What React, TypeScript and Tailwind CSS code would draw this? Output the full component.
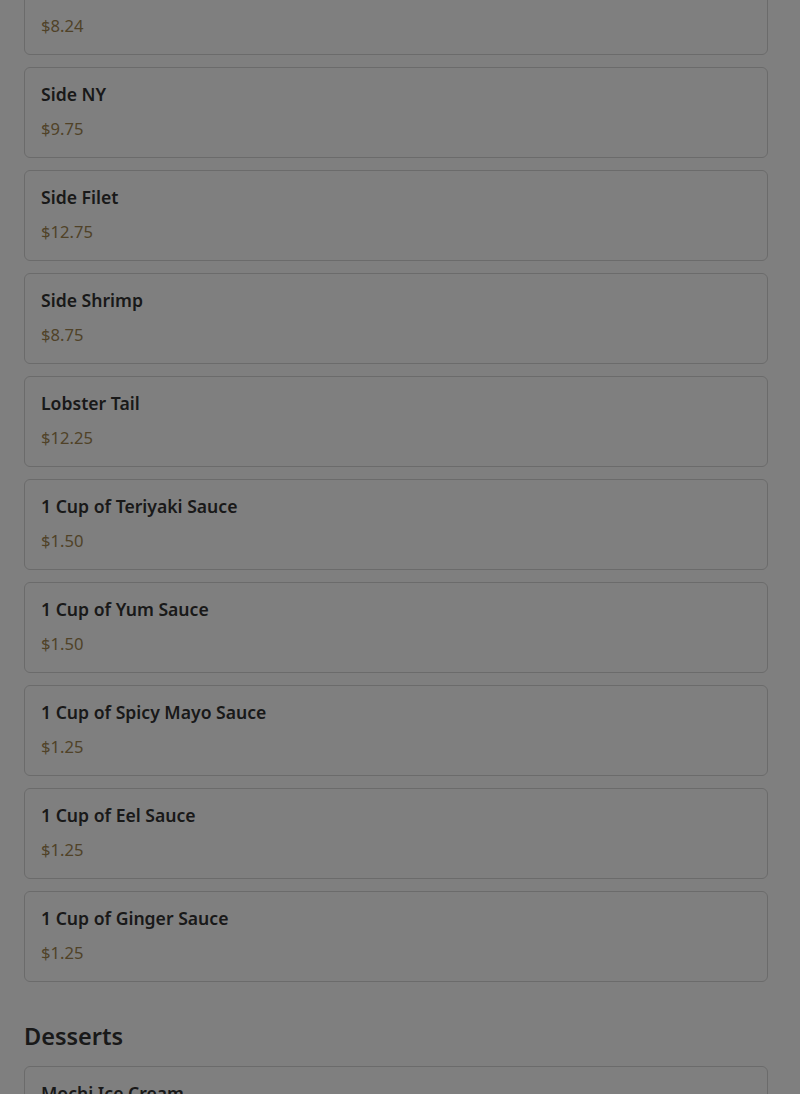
import React from 'react'

interface MenuItem {
  name: string
  price: string
}

const sides: MenuItem[] = [
  { name: 'Side Chicken', price: '$8.24' },
  { name: 'Side NY', price: '$9.75' },
  { name: 'Side Filet', price: '$12.75' },
  { name: 'Side Shrimp', price: '$8.75' },
  { name: 'Lobster Tail', price: '$12.25' },
  { name: '1 Cup of Teriyaki Sauce', price: '$1.50' },
  { name: '1 Cup of Yum Sauce', price: '$1.50' },
  { name: '1 Cup of Spicy Mayo Sauce', price: '$1.25' },
  { name: '1 Cup of Eel Sauce', price: '$1.25' },
  { name: '1 Cup of Ginger Sauce', price: '$1.25' },
]

const desserts: MenuItem[] = [
  { name: 'Mochi Ice Cream', price: '$5.50' },
  { name: 'Tempura Ice Cream', price: '$6.50' },
]

function MenuCard({ item }: { item: MenuItem }) {
  return (
    <div className="flex h-[91px] flex-col rounded-md border border-[#d6d6d6] bg-white px-4 pt-[14px]">
      <p className="text-[17.6px] font-semibold leading-[24px] text-[#333]">{item.name}</p>
      <p className="mt-[11px] text-[16.6px] leading-[24px] text-[#a08550]">{item.price}</p>
    </div>
  )
}

export default function App() {
  return (
    <div
      className="relative h-[1094px] overflow-hidden bg-white"
      style={{ fontFamily: '"Noto Sans", "Open Sans", sans-serif' }}
    >
      <div className="-mt-[36px] flex flex-col pl-6 pr-8">
        <div className="flex flex-col gap-3">
          {sides.map((item) => (
            <MenuCard key={item.name} item={item} />
          ))}
        </div>

        <h2 className="mb-[14px] mt-[38px] text-[23.5px] font-semibold leading-[32px] text-[#333]">
          Desserts
        </h2>
        <div className="flex flex-col gap-3">
          {desserts.map((item) => (
            <MenuCard key={item.name} item={item} />
          ))}
        </div>
      </div>

      <div className="absolute inset-0 bg-black/50" />
    </div>
  )
}
